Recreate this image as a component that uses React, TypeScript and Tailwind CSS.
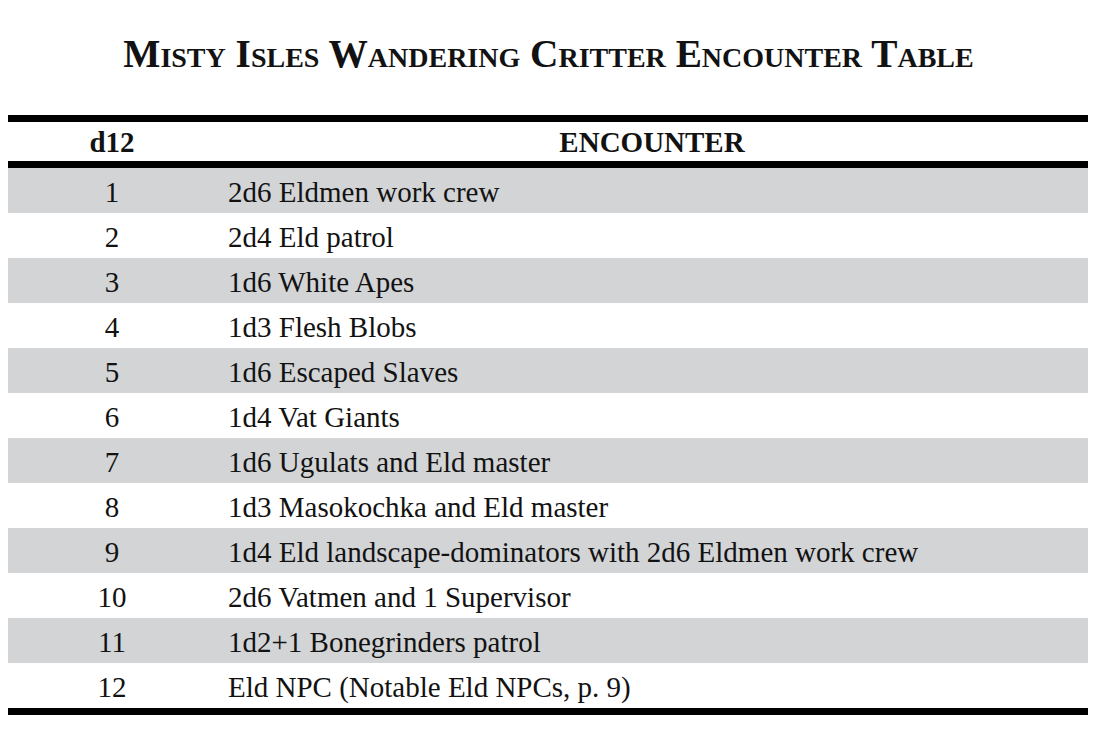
const rows: [string, string][] = [
  ['1', '2d6 Eldmen work crew'],
  ['2', '2d4 Eld patrol'],
  ['3', '1d6 White Apes'],
  ['4', '1d3 Flesh Blobs'],
  ['5', '1d6 Escaped Slaves'],
  ['6', '1d4 Vat Giants'],
  ['7', '1d6 Ugulats and Eld master'],
  ['8', '1d3 Masokochka and Eld master'],
  ['9', '1d4 Eld landscape-dominators with 2d6 Eldmen work crew'],
  ['10', '2d6 Vatmen and 1 Supervisor'],
  ['11', '1d2+1 Bonegrinders patrol'],
  ['12', 'Eld NPC (Notable Eld NPCs, p. 9)'],
];

export default function App() {
  return (
    <div className="min-h-screen bg-white text-[#121212] font-['Liberation_Serif',serif]">
      <h1 className="pt-[35px] h-[115px] text-center text-[39.3px] leading-none font-bold [font-variant-caps:small-caps]">
        Misty Isles Wandering Critter Encounter Table
      </h1>

      <div className="ml-[8px] w-[1080px] border-t-[7px] border-b-[7px] border-black">
        <div className="flex h-[46px] items-center pt-[3px] text-[29px] font-bold border-b-[7px] border-black">
          <div className="w-[208px] text-center">d12</div>
          <div className="flex-1 text-center">ENCOUNTER</div>
        </div>
        {rows.map(([roll, text], i) => (
          <div
            key={roll}
            className={`flex h-[45px] items-center pt-[4px] text-[29px] ${i % 2 === 0 ? 'bg-[#d3d4d6]' : 'bg-white'}`}
          >
            <div className="w-[208px] text-center">{roll}</div>
            <div className="flex-1 pl-[12px]">{text}</div>
          </div>
        ))}
      </div>
    </div>
  );
}
